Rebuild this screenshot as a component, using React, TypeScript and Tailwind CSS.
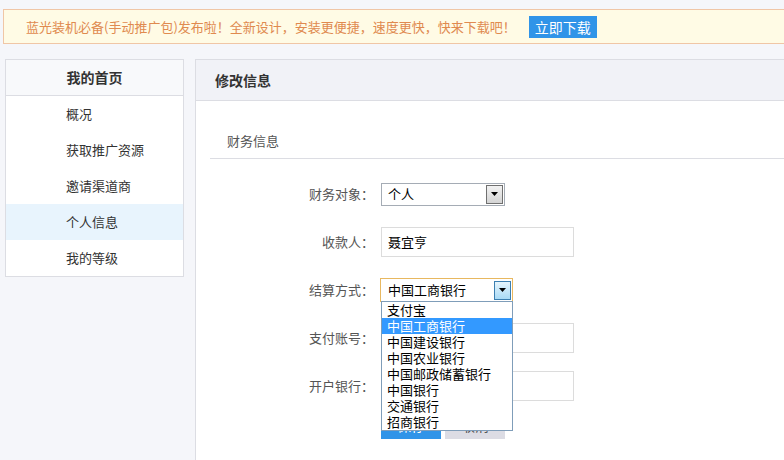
import React from "react";

const font = { fontFamily: '"Noto Sans CJK SC", "Liberation Sans", sans-serif' };

const menu = ["概况", "获取推广资源", "邀请渠道商", "个人信息", "我的等级"];
const banks = ["支付宝", "中国工商银行", "中国建设银行", "中国农业银行", "中国邮政储蓄银行", "中国银行", "交通银行", "招商银行"];

function Arrow({ focused }: { focused?: boolean }) {
  return (
    <div
      className={
        focused
          ? "w-[17px] h-[19px] border border-[#3c7fb1] bg-gradient-to-b from-[#e5f4fc] to-[#a9dbf6] flex items-center justify-center"
          : "w-[17px] h-[19px] border border-[#707070] bg-gradient-to-b from-[#f2f2f2] to-[#d4d4d4] flex items-center justify-center"
      }
    >
      <svg width="7" height="4" viewBox="0 0 7 4">
        <path d="M0 0h7L3.5 4z" fill="#000" />
      </svg>
    </div>
  );
}

function Row({ label, children }: { label: string; children: React.ReactNode }) {
  return (
    <div className="h-[48px] flex items-center">
      <div className="w-[100px] text-right text-[13px] text-[#555] pr-[2px]">{label}：</div>
      <div className="ml-[5px] relative">{children}</div>
    </div>
  );
}

export default function App() {
  return (
    <div className="w-[784px] h-[460px] overflow-hidden bg-[#f5f6fa]" style={font}>
      <div className="ml-[3px] mt-[9px] h-[35px] border border-[#f0c6a6] border-r-0 bg-[#fffbe5] flex items-center">
        <span className="ml-[22px] text-[13px] text-[#e08a4f]">
          蓝光装机必备(手动推广包)发布啦！全新设计，安装更便捷，速度更快，快来下载吧！
        </span>
        <button className="ml-[13px] w-[68px] h-[22px] bg-[#3094e8] text-white text-[14px] leading-[22px]">
          立即下载
        </button>
      </div>

      <div className="flex mt-[15px]">
        <div className="ml-[5px] w-[179px] h-[218px] border border-[#dcdde3] bg-white">
          <div className="h-[36px] bg-[#f8f9fb] border-b border-[#dcdde3] flex items-center justify-center text-[14px] font-bold text-[#333]">
            我的首页
          </div>
          {menu.map((m) => (
            <div
              key={m}
              className={
                m === "个人信息"
                  ? "h-[36px] pl-[60px] flex items-center text-[13px] text-[#333] bg-[#e8f4fd]"
                  : "h-[36px] pl-[60px] flex items-center text-[13px] text-[#333]"
              }
            >
              {m}
            </div>
          ))}
        </div>

        <div className="ml-[11px] flex-1 h-[420px] border-l border-t border-[#dcdde3] bg-white">
          <div className="h-[41px] bg-[#f1f2f7] border-b border-[#dcdde3] flex items-center pl-[19px] text-[14px] font-bold text-[#333]">
            修改信息
          </div>
          <div className="ml-[14px] mt-[23px] h-[35px] border-b border-[#dcdde3] flex items-center pl-[17px] text-[13px] text-[#555]">
            财务信息
          </div>

          <div className="pl-[80px] mt-[11px]">
            <Row label="财务对象">
              <div className="w-[124px] h-[23px] border border-[#a5acb5] flex items-center justify-between pl-[6px] pr-px">
                <span className="text-[13px] text-black">个人</span>
                <Arrow />
              </div>
            </Row>
            <Row label="收款人">
              <div className="w-[193px] h-[30px] border border-[#dcdcdc] flex items-center pl-[6px] text-[13px] text-black">
                聂宜亨
              </div>
            </Row>
            <Row label="结算方式">
              <div className="w-[133px] h-[24px] border border-[#e8b860] -ml-px flex items-center justify-between pl-[7px] pr-px">
                <span className="text-[13px] text-black">中国工商银行</span>
                <Arrow focused />
              </div>
              <div className="absolute left-0 top-[23px] w-[132px] border border-[#7f9db9] bg-white z-10">
                {banks.map((b) => (
                  <div
                    key={b}
                    className={
                      b === "中国工商银行"
                        ? "h-[16px] leading-[16px] pl-[5px] text-[13px] bg-[#3399ff] text-white"
                        : "h-[16px] leading-[16px] pl-[5px] text-[13px] text-black"
                    }
                  >
                    {b}
                  </div>
                ))}
              </div>
            </Row>
            <Row label="支付账号">
              <div className="w-[193px] h-[30px] border border-[#dcdcdc]" />
            </Row>
            <Row label="开户银行">
              <div className="w-[193px] h-[30px] border border-[#dcdcdc]" />
            </Row>
            <div className="flex ml-[105px] mt-[2px]">
              <button className="w-[60px] h-[27px] bg-[#3094e8] text-white text-[14px]">保存</button>
              <button className="ml-[4px] w-[60px] h-[27px] bg-[#dcdce4] text-[#555] text-[14px]">取消</button>
            </div>
          </div>
        </div>
      </div>
    </div>
  );
}
